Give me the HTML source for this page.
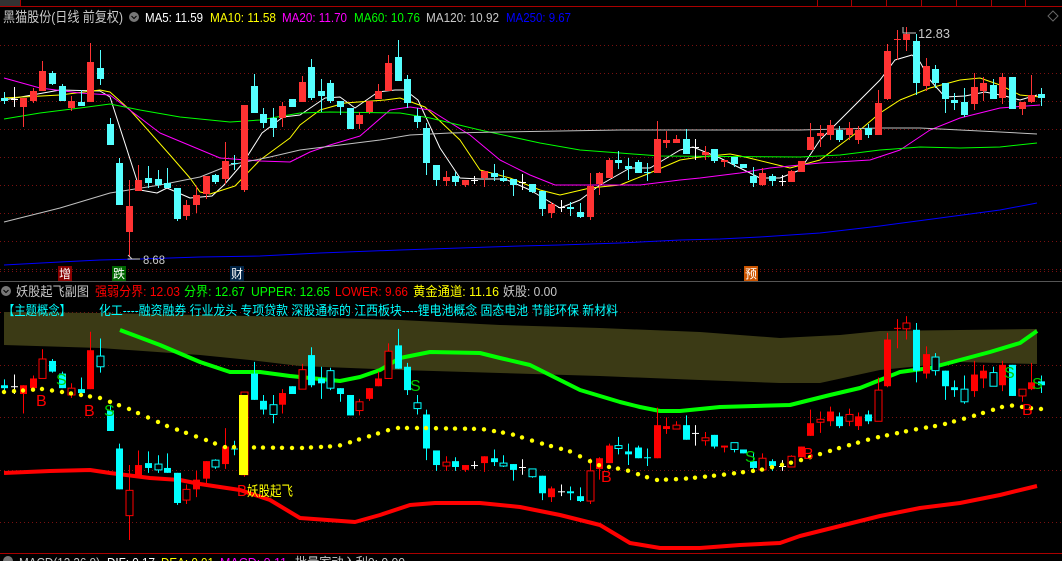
<!DOCTYPE html>
<html><head><meta charset="utf-8"><style>
html,body{margin:0;padding:0;background:#000;}
body{width:1062px;height:561px;overflow:hidden;position:relative;font-family:"Liberation Sans","Noto Sans CJK SC",sans-serif;}
svg{position:absolute;left:0;top:0;}
</style></head><body>
<svg id="s" width="1062" height="561" xmlns="http://www.w3.org/2000/svg"></svg>
<script>
const S=document.getElementById('s');let h='';
function L(x1,y1,x2,y2,c,w,d){h+=`<line x1="${x1}" y1="${y1}" x2="${x2}" y2="${y2}" stroke="${c}" stroke-width="${w||1}"${d?` stroke-dasharray="${d}"`:''}/>`;}
function P(pts,c,w){h+=`<polyline fill="none" stroke="${c}" stroke-width="${w}" stroke-linejoin="round" points="${pts.map(p=>p.join(',')).join(' ')}"/>`;}
function T(s,x1,x2,y,c,fs){h+=`<text x="${x1}" y="${y}" fill="${c}" font-family="Liberation Sans,Noto Sans CJK SC,sans-serif" font-size="${fs||13}" textLength="${x2-x1}" lengthAdjust="spacingAndGlyphs">${s}</text>`;}
// top bar
h+='<rect x="0" y="0" width="20" height="6" fill="#333"/>';L(0,6.5,1062,6.5,'#a00',1);
[20,817,851,886,921,956,991,1025].forEach(x=>L(x+.5,0,x+.5,6,'#a00',1));
// top grid
for(let y=45;y<=270;y+=28)L(0,y+.5,1062,y+.5,'#7a1010',1,'1 3');
L(0,271.5,1062,271.5,'#7a1010',1,'1 3');
L(0,281.5,1062,281.5,'#555',1);
h+='<path d="M1053 11 L1058 16 L1053 21 L1048 16Z" fill="none" stroke="#666"/>';
h+='<circle cx="134" cy="17" r="5" fill="#777"/><path d="M131.5 16l2.5 2.5 2.5-2.5" stroke="#000" fill="none"/>';
h+='<circle cx="6" cy="291" r="5" fill="#777"/><path d="M3.5 290l2.5 2.5 2.5-2.5" stroke="#000" fill="none"/>';
// header texts
T('黑猫股份(日线 前复权)',3,123,22,'#c8c8c8',14);
T('MA5: 11.59',145,203,22,'#fff');
T('MA10: 11.58',210,276,22,'#ff0');
T('MA20: 11.70',282,347,22,'#f0f');
T('MA60: 10.76',354,420,22,'#0f0');
T('MA120: 10.92',426,499,22,'#c8c8c8');
T('MA250: 9.67',506,571,22,'#00f');
T('妖股起飞副图',16,89,296,'#c8c8c8');
T('强弱分界: 12.03',95,180,296,'#f00');
T('分界: 12.67',184,245,296,'#0f0');
T('UPPER: 12.65',251,330,296,'#0f0');
T('LOWER: 9.66',335,408,296,'#f00');
T('黄金通道: 11.16',413,499,296,'#ff0');
T('妖股: 0.00',503,557,296,'#c8c8c8');
// bottom grid
[312,365,417,470,522].forEach(y=>L(0,y+.5,1062,y+.5,'#7a1010',1,'1 3'));
// olive band
const ot=[[4,312],[100,313],[200,315],[300,317],[400,320],[500,325],[600,328],[700,332],[780,338],[840,335],[880,331],[960,330],[1037,329]];
const ob=[[1037,364],[960,362],[880,370],[820,383],[780,383],[700,380],[600,376],[500,373],[400,370],[300,366],[250,360],[200,355],[100,348],[4,345]];
h+=`<polygon fill="#3b3a15" points="${ot.concat(ob).map(p=>p.join(',')).join(' ')}"/>`;
T('【主题概念】',3,71,315,'#0ff');
T('化工----融资融券 行业龙头 专项贷款 深股通标的 江西板块----锂电池概念 固态电池 节能环保 新材料',99,618,315,'#0ff');
// MA lines top
P([[4,100],[60,90],[100,91],[110,97],[140,190],[157,193],[167,188],[190,198],[212,196],[224,185],[243,163],[262,133],[283,117],[300,115],[325,98],[340,97],[355,108],[378,92],[395,90],[405,90],[418,100],[440,148],[460,178],[480,179],[505,179],[530,190],[560,208],[580,200],[600,185],[630,168],[650,168],[680,150],[693,147],[720,158],[740,168],[760,178],[780,178],[800,170],[820,140],[860,100],[880,80],[895,60],[912,55],[920,62],[930,80],[945,97],[965,96],[985,92],[1005,96],[1020,100],[1037,95]],'#fff',1);
P([[4,98],[60,95],[100,90],[110,92],[130,110],[170,155],[190,178],[200,192],[210,194],[235,186],[260,160],[290,138],[300,125],[320,110],[345,103],[385,100],[400,98],[425,107],[460,140],[480,170],[510,178],[540,190],[560,195],[590,188],[620,185],[645,175],[680,160],[700,157],[730,154],[745,157],[790,168],[820,160],[860,130],[880,113],[900,100],[930,88],[960,80],[980,78],[1000,85],[1020,95],[1040,97]],'#ff0',1);
P([[4,78],[40,88],[80,93],[110,95],[160,133],[220,158],[260,161],[290,162],[310,152],[330,145],[360,136],[390,110],[410,107],[430,110],[470,135],[500,160],[530,175],[555,185],[600,185],[640,185],[680,180],[700,178],[740,173],[770,168],[820,163],[870,160],[900,150],[930,130],[960,118],[1000,108],[1040,105]],'#f0f',1);
P([[4,119],[40,113],[80,108],[110,104],[140,110],[180,117],[230,122],[260,120],[300,113],[330,112],[400,113],[430,118],[480,130],[540,143],[580,150],[620,153],[660,156],[800,157],[840,155],[880,150],[920,147],[960,148],[1000,147],[1037,143]],'#0f0',1);
P([[4,222],[60,208],[110,193],[160,185],[200,177],[230,165],[270,157],[300,150],[340,145],[380,140],[410,135],[450,133],[500,132],[560,131],[620,130],[800,130],[880,128],[920,128],[960,130],[1000,132],[1037,134]],'#c0c0c0',1);
P([[4,265],[60,262],[100,260],[140,259],[200,257],[260,256],[320,253],[400,250],[460,248],[520,246],[560,245],[620,243],[680,240],[720,239],[760,237],[820,233],[880,226],[940,218],[1000,210],[1037,203]],'#00f',1);
const C=[[98,101,92,104,'c'],[99,99,87,107,'w'],[98,107,98,127,'r'],[91,101,88,103,'r'],[71,91,61,91,'r'],[73,84,71,85,'c'],[86,101,84,101,'c'],[101,108,96,111,'r'],[102,106,90,106,'c'],[62,102,43,102,'r'],[68,79,50,85,'c'],[124,145,118,145,'c'],[163,205,158,205,'c'],[206,232,180,257,'r'],[180,191,165,191,'r'],[178,183,166,188,'c'],[179,185,170,188,'c'],[183,188,168,188,'c'],[188,219,188,221,'c'],[205,216,200,220,'r'],[195,205,186,213,'r'],[176,194,176,199,'r'],[175,182,174,184,'c'],[161,179,142,184,'r'],[163,163,155,170,'c'],[105,190,105,192,'r'],[86,113,74,113,'c'],[114,123,108,128,'c'],[118,128,108,137,'c'],[106,118,102,127,'r'],[99,107,99,107,'c'],[82,102,76,102,'r'],[67,98,59,100,'c'],[91,96,79,112,'c'],[83,101,80,103,'c'],[101,107,101,115,'c'],[108,129,108,129,'c'],[115,124,112,129,'r'],[101,112,101,114,'r'],[91,99,84,99,'r'],[63,91,55,91,'r'],[57,81,40,81,'c'],[79,103,75,108,'c'],[116,122,108,128,'c'],[128,163,123,175,'c'],[165,180,165,186,'c'],[177,181,171,186,'r'],[176,182,172,186,'c'],[180,185,180,187,'r'],[180,180,176,184,'w'],[171,178,171,187,'r'],[173,177,164,181,'c'],[178,181,170,182,'c'],[179,185,179,196,'c'],[182,182,174,190,'w'],[184,192,184,193,'c'],[191,209,191,216,'c'],[204,213,202,218,'r'],[207,207,200,212,'w'],[207,209,202,216,'c'],[212,217,203,218,'c'],[186,217,173,220,'r'],[173,184,172,195,'r'],[160,178,158,178,'r'],[160,163,151,169,'c'],[166,169,158,180,'c'],[162,173,160,173,'c'],[172,172,163,181,'c'],[139,173,121,173,'r'],[140,143,131,148,'r'],[139,143,135,143,'r'],[139,154,129,154,'c'],[147,147,139,160,'w'],[152,155,146,160,'r'],[149,161,149,163,'c'],[160,162,160,167,'r'],[157,164,157,167,'c'],[164,168,164,168,'c'],[176,183,167,187,'c'],[173,185,168,186,'r'],[176,181,174,186,'c'],[181,181,175,186,'w'],[171,182,170,182,'r'],[161,172,161,172,'r'],[137,150,123,150,'r'],[133,136,125,147,'r'],[125,135,120,140,'r'],[130,140,126,142,'c'],[128,135,122,140,'r'],[130,140,126,144,'r'],[128,135,124,138,'c'],[103,135,90,135,'r'],[51,99,44,100,'r'],[39,39,30,60,'r'],[34,40,27,51,'r'],[41,83,34,95,'c'],[66,86,58,91,'r'],[69,83,65,88,'c'],[83,99,83,113,'c'],[100,103,93,110,'c'],[102,115,88,117,'c'],[87,104,73,110,'r'],[83,91,77,101,'r'],[85,99,79,99,'c'],[77,98,73,104,'r'],[77,109,77,109,'c'],[102,109,102,115,'r'],[95,102,75,103,'r'],[94,98,88,106,'c']];
const col={r:'#ff3333',c:'#55ffff',w:'#ffffff'};
const col2={r:'#ff0000',c:'#00ffff',w:'#ffffff'};
function candles(k,b,cm,hollow){C.forEach((d,i)=>{const x=Math.round(4+9.6*i);const c=cm[d[4]];const y=v=>b+k*v;
let t=y(d[0]),bt=y(d[1]);L(x+.5,y(d[2]),x+.5,y(d[3]),c,1);
if(bt-t<1.5){L(x-3,t+.5,x+4,t+.5,c,1);}else{
if(hollow&&(i%3==1)&&d[4]!='w')h+=`<rect x="${x-3}" y="${t}" width="7" height="${bt-t}" fill="#000" stroke="${c}"/>`;
else h+=`<rect x="${x-3}" y="${t}" width="7" height="${bt-t}" fill="${c}"/>`;}});}
candles(1,0,col,false);
P([[128,255],[132,259],[128,259],[140,259]],'#c8c8c8',1);
T('8.68',143,165,264,'#c8c8c8',12);
P([[903,27],[903,33],[916,33]],'#c8c8c8',1);
T('12.83',918,950,38,'#c8c8c8',13);
// marker boxes
[[58,'增','#800'],[112,'跌','#060'],[230,'财','#024'],[744,'预','#c50']].forEach(m=>{h+=`<rect x="${m[0]}" y="266" width="14" height="15" fill="${m[2]}"/>`;T(m[1],m[0]+1,m[0]+13,278,'#fff',12);});
// bottom lines
P([[120,330],[160,345],[200,362],[230,372],[260,372],[290,376],[340,381],[360,377],[380,370],[400,358],[430,352],[480,353],[500,358],[530,365],[560,380],[580,390],[620,402],[640,407],[660,411],[680,411],[720,407],[790,405],[810,400],[830,395],[860,388],[880,380],[900,372],[930,368],[960,360],[990,352],[1020,343],[1037,331]],'#00ff00',4);
P([[4,473],[50,471],[90,470],[110,473],[150,478],[180,480],[200,484],[240,490],[270,500],[300,518],[355,522],[380,515],[410,505],[435,503],[480,503],[520,507],[560,515],[600,525],[630,543],[660,548],[700,548],[740,545],[780,543],[800,536],[840,526],[880,516],[920,508],[960,503],[1000,495],[1037,486]],'#ff0000',4);
candles(0.973,289.9,col2,true);
const yd=[[4,392],[42,389],[62,392],[100,398],[129,409],[167,426],[206,440],[224,447],[300,448],[338,446],[367,437],[395,428],[420,428],[482,429],[511,434],[540,443],[569,451],[598,465],[626,470],[655,480],[682,479],[721,475],[760,470],[798,461],[836,449],[874,438],[912,430],[941,425],[970,417],[999,408],[1008,405],[1037,409]];
function yi(x){for(let j=0;j<yd.length-1;j++){if(x>=yd[j][0]&&x<=yd[j+1][0]){const f=(x-yd[j][0])/(yd[j+1][0]-yd[j][0]);return yd[j][1]+f*(yd[j+1][1]-yd[j][1]);}}return 409;}
for(let i=0;i<109;i++){const x=Math.round(4+9.6*i);if(x>=236&&x<=248)continue;h+=`<circle cx="${x}" cy="${yi(x)}" r="2.2" fill="#ff0"/>`;}
h+='<rect x="239" y="395" width="9" height="80" fill="#ff0"/>';
T('B',237,247,496,'#f00',16);T('妖股起飞',247,293,496,'#ff0',14);
[[36,406,'B','#f00'],[56,385,'S','#0c0'],[84,416,'B','#f00'],[104,416,'S','#0c0'],[410,391,'S','#0c0'],[601,482,'B','#f00'],[745,462,'S','#0c0'],[803,459,'B','#f00'],[1004,378,'S','#0c0'],[1022,415,'B','#f00'],[1032,389,'S','#0c0']].forEach(a=>{h+=`<text x="${a[0]}" y="${a[1]}" fill="${a[3]}" font-family="Liberation Sans" font-size="16">${a[2]}</text>`;});
L(0,553.5,1062,553.5,'#a00',1);
h+='<circle cx="8" cy="561" r="5" fill="#777"/>';
T('MACD(12,26,9)',19,100,567,'#c8c8c8',13);
T('DIF: 0.17',107,155,567,'#fff',13);
T('DEA: 0.01',161,214,567,'#ff0',13);
T('MACD: 0.11',220,287,567,'#f0f',13);
T('批量家动入利0: 0.00',295,405,567,'#c8c8c8',13);
S.innerHTML=h;
</script>
</body></html>
